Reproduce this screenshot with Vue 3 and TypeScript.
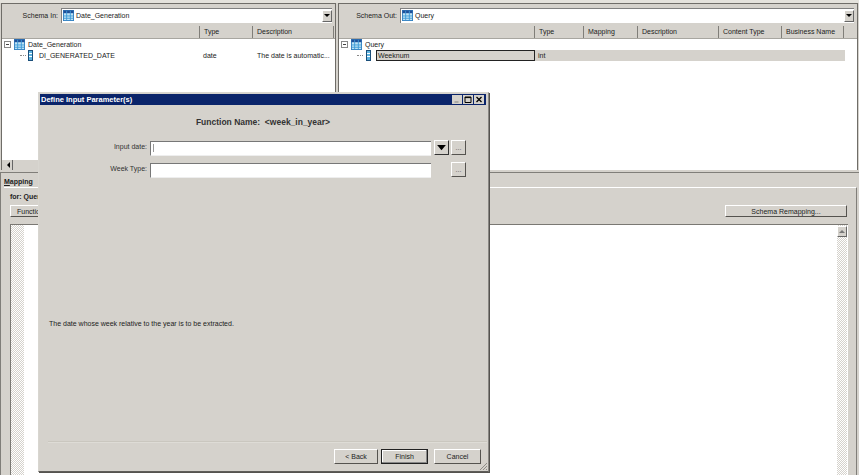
<template>
  <div class="desk">
    <div class="top-strip"></div>
    <div class="panes">
      <section class="pane left">
        <div class="schema-row">
          <label class="schema-label in">Schema In:</label>
          <div class="combo">
            <svg class="tbl" viewBox="0 0 12 12"><use href="#tbl-icon" /></svg>
            <span>Date_Generation</span>
            <span class="combo-arrow"><i></i></span>
          </div>
        </div>
        <div class="col-head">
          <div v-for="c in leftCols" :key="c.name" class="col" :style="{ width: c.w + 'px' }">{{ c.name }}</div>
        </div>
        <div class="tree">
          <div class="tree-row root">
            <span class="expander"></span>
            <svg class="tbl" viewBox="0 0 12 12"><use href="#tbl-icon" /></svg>
            <span>Date_Generation</span>
          </div>
          <div class="tree-row child">
            <span class="dots"></span>
            <svg class="field" viewBox="0 0 5 11"><use href="#field-icon" /></svg>
            <span class="name plain">DI_GENERATED_DATE</span>
            <span class="type">date</span>
            <span class="desc">The date is automatic...</span>
          </div>
        </div>
        <div class="hscroll"><span class="scroll-btn"><i></i></span></div>
      </section>

      <section class="pane right">
        <div class="schema-row">
          <label class="schema-label out">Schema Out:</label>
          <div class="combo">
            <svg class="tbl" viewBox="0 0 12 12"><use href="#tbl-icon" /></svg>
            <span>Query</span>
            <span class="combo-arrow"><i></i></span>
          </div>
        </div>
        <div class="col-head">
          <div v-for="c in rightCols" :key="c.name" class="col" :style="{ width: c.w + 'px' }">{{ c.name }}</div>
        </div>
        <div class="tree">
          <div class="tree-row root">
            <span class="expander"></span>
            <svg class="tbl" viewBox="0 0 12 12"><use href="#tbl-icon" /></svg>
            <span>Query</span>
          </div>
          <div class="tree-row child out-row">
            <span class="dots"></span>
            <svg class="field" viewBox="0 0 5 11"><use href="#field-icon" /></svg>
            <span class="selected">
              <span class="name">Weeknum</span>
              <span class="type-out">int</span>
            </span>
          </div>
        </div>
      </section>
    </div>

    <section class="mapping">
      <div class="tab-label"><u>M</u>apping</div>
      <div class="tab-page">
        <div class="for-label">for: Query</div>
        <div class="mapping-tools">
          <button class="btn fn">Functions...</button>
          <button class="btn remap">Schema Remapping...</button>
        </div>
        <div class="editor">
          <div class="hatch"></div>
          <div class="editor-body"></div>
          <div class="hatch right-hatch"><span class="scroll-up"><i></i></span></div>
        </div>
      </div>
    </section>

    <div class="dialog">
      <div class="titlebar">
        <span>Define Input Parameter(s)</span>
        <div class="win-btns">
          <span class="win"><svg viewBox="0 0 9 9"><path d="M2 7h4" stroke="#9a9a96" stroke-width="1.4" /></svg></span>
          <span class="win"><svg viewBox="0 0 9 9"><path d="M1.5 2h6v5.5h-6zM1.5 2.6h6" fill="none" stroke="#000" /></svg></span>
          <span class="win"><svg viewBox="0 0 9 9"><path d="M2 2l5 5M7 2l-5 5" stroke="#000" stroke-width="1.3" /></svg></span>
        </div>
      </div>
      <h2 class="fn-name">Function Name:&nbsp; &lt;week_in_year&gt;</h2>
      <div class="form">
        <label>Input date:</label>
        <div class="input"><span class="caret"></span></div>
        <button class="btn drop"><svg viewBox="0 0 12 8"><path d="M1 1h10L6 7z" fill="#000" /></svg></button>
        <button class="btn dots-btn">...</button>
        <label>Week Type:</label>
        <div class="input"></div>
        <span></span>
        <button class="btn dots-btn">...</button>
      </div>
      <p class="help">The date whose week relative to the year is to be extracted.</p>
      <div class="separator"></div>
      <div class="actions">
        <button class="btn back">&lt; Back</button>
        <button class="btn finish">Finish</button>
        <button class="btn cancel">Cancel</button>
      </div>
      <svg class="grip" viewBox="0 0 10 10">
        <path d="M9 2L2 9M9 5L5 9M9 8L8 9" stroke="#8f8d88" fill="none" />
      </svg>
    </div>

    <svg width="0" height="0" class="defs">
      <defs>
        <g id="tbl-icon">
          <rect x="0.5" y="0.5" width="11" height="11" fill="#bfe3f5" stroke="#2f7fc0" />
          <rect x="0.5" y="0.5" width="11" height="3" fill="#1f4f98" />
          <path d="M4 1v10M8 1v10M1 6.5h10M1 9h10" stroke="#3d9ad6" />
        </g>
        <g id="field-icon">
          <rect x="0.5" y="0.5" width="4" height="10" fill="#5fb4e0" stroke="#1b4f7a" />
          <path d="M1 3.5h3M1 6.5h3" stroke="#fff" />
        </g>
      </defs>
    </svg>
  </div>
</template>

<script setup lang="ts">
const leftCols = [
  { name: '', w: 198 },
  { name: 'Type', w: 53 },
  { name: 'Description', w: 81 },
]

const rightCols = [
  { name: '', w: 196 },
  { name: 'Type', w: 49 },
  { name: 'Mapping', w: 54 },
  { name: 'Description', w: 81 },
  { name: 'Content Type', w: 63 },
  { name: 'Business Name', w: 62 },
]
</script>

<style>
html, body {
  margin: 0;
  overflow: hidden;
  background: #fff;
}
</style>

<style scoped>
.desk {
  position: relative;
  width: 859px;
  height: 475px;
  overflow: hidden;
  background: #d5d2cc;
  font-family: "Liberation Sans", sans-serif;
  font-size: 7px;
  color: #222;
  display: flex;
  flex-direction: column;
}

.defs {
  position: absolute;
}

.top-strip {
  height: 3px;
  flex: none;
  background: #e4e2dc;
}

.panes {
  display: flex;
  gap: 2px;
  height: 167px;
  flex: none;
  padding: 0 1px 0 1px;
}

.pane {
  position: relative;
  background: #fff;
  border: 1px solid #6f6d68;
  border-bottom: none;
  box-sizing: border-box;
  display: flex;
  flex-direction: column;
}

.pane.left {
  width: 335px;
}

.pane.right {
  flex: 1;
}

.schema-row {
  height: 22px;
  flex: none;
  background: #d5d2cc;
  display: flex;
  align-items: center;
  padding-right: 3px;
}

.schema-label {
  text-align: right;
  flex: none;
  padding-right: 3px;
  box-sizing: border-box;
}

.schema-label.in {
  width: 59px;
}

.schema-label.out {
  width: 61px;
}

.combo {
  flex: 1;
  height: 15px;
  background: #fff;
  border-top: 1px solid #808080;
  border-left: 1px solid #808080;
  box-sizing: border-box;
  display: flex;
  align-items: center;
  gap: 2px;
  position: relative;
}

.combo .tbl {
  margin-left: 1px;
}

.combo-arrow {
  position: absolute;
  right: 0;
  top: 1px;
  width: 10px;
  height: 12px;
  background: #d5d2cc;
  border: 1px solid;
  border-color: #fff #666 #666 #fff;
  box-sizing: border-box;
  display: flex;
  align-items: center;
  justify-content: center;
}

.combo-arrow i {
  border: 3px solid transparent;
  border-top: 3px solid #000;
  border-bottom: none;
}

.tbl {
  width: 11px;
  height: 11px;
  flex: none;
}

.col-head {
  height: 13px;
  flex: none;
  display: flex;
  background: #d5d2cc;
  border-bottom: 1px solid #a8a6a0;
  box-sizing: border-box;
}

.col {
  flex: none;
  box-sizing: border-box;
  padding-left: 4px;
  line-height: 12px;
  border-right: 1px solid #807e79;
  white-space: nowrap;
  overflow: hidden;
}

.tree-row {
  height: 11px;
  display: flex;
  align-items: center;
  position: relative;
  white-space: nowrap;
}

.tree {
  flex: 1;
}

.root {
  padding-left: 2px;
}

.root .tbl {
  margin: 0 3px 0 3px;
}

.expander {
  width: 7px;
  height: 7px;
  border: 1px solid #888;
  box-sizing: border-box;
  background: linear-gradient(#444, #444) center / 3px 1px no-repeat;
  flex: none;
}

.child {
  padding-left: 18px;
}

.dots {
  width: 6px;
  border-top: 1px dotted #888;
  flex: none;
}

.field {
  width: 5px;
  height: 11px;
  margin-left: 2px;
  flex: none;
}

.out-row .field {
  margin-left: 3px;
}

.name.plain {
  margin-left: 6px;
  width: 164px;
  flex: none;
}

.type {
  width: 54px;
  flex: none;
}

.desc {
  flex: none;
}

.selected {
  margin-left: 5px;
  flex: 1;
  display: flex;
  height: 11px;
  margin-right: 12px;
  background: #d5d2cc;
}

.selected .name {
  width: 159px;
  height: 11px;
  box-sizing: border-box;
  flex: none;
  border: 1px solid #222;
  line-height: 9px;
  padding-left: 1px;
}

.type-out {
  padding-left: 3px;
  line-height: 11px;
}

.hscroll {
  height: 10px;
  flex: none;
  background: #d5d2cc;
  padding-left: 2px;
}

.scroll-btn {
  display: flex;
  width: 9px;
  height: 10px;
  box-sizing: border-box;
  align-items: center;
  justify-content: center;
  border-right: 1px solid #666;
}

.scroll-btn i {
  border: 3px solid transparent;
  border-right: 3px solid #000;
  border-left: none;
}

.mapping {
  flex: 1;
  margin-top: 2px;
  border-top: 1px solid #807e79;
  border-left: 1px solid #807e79;
  display: flex;
  flex-direction: column;
  padding: 0 2px 0 3px;
}

.tab-label {
  margin: 3px 0 0 0;
  line-height: 11px;
  font-weight: bold;
}

.tab-page {
  flex: 1;
  display: flex;
  flex-direction: column;
  border-top: 1px solid #fff;
  border-right: 1px solid #807e79;
  padding: 0 8px 0 6px;
}

.for-label {
  margin-top: 3px;
  line-height: 11px;
  font-weight: bold;
}

.mapping-tools {
  display: flex;
  justify-content: space-between;
  margin-top: 3px;
  padding-right: 1px;
}

.btn {
  font: inherit;
  color: inherit;
  padding: 0;
  background: #d5d2cc;
  box-sizing: border-box;
  border: 1px solid;
  border-color: #fff #55534f #55534f #fff;
}

.fn {
  width: 60px;
  height: 12px;
  text-align: left;
  padding-left: 6px;
}

.remap {
  width: 122px;
  height: 12px;
}

.editor {
  flex: 1;
  margin-top: 7px;
  background: #fff;
  border-top: 1px solid #7a7873;
  border-left: 1px solid #7a7873;
  display: flex;
}

.hatch {
  width: 13px;
  flex: none;
  background-color: #fff;
  background-image: repeating-conic-gradient(#d5d2cc 0 25%, #fff 0 50%);
  background-size: 2px 2px;
}

.right-hatch {
  width: 10px;
  margin-right: 1px;
  position: relative;
}

.editor-body {
  flex: 1;
}

.scroll-up {
  position: absolute;
  top: 1px;
  left: 0;
  width: 10px;
  height: 11px;
  box-sizing: border-box;
  background: #d5d2cc;
  border: 1px solid;
  border-color: #fff #666 #666 #fff;
  display: flex;
  align-items: center;
  justify-content: center;
}

.scroll-up i {
  border: 3px solid transparent;
  border-bottom: 3px solid #777;
  border-top: none;
}

.dialog {
  position: absolute;
  left: 38px;
  top: 92px;
  width: 451px;
  height: 380px;
  background: #d5d2cc;
  box-sizing: border-box;
  padding: 1px 1px 0 1px;
  border: 1px solid;
  border-color: #d8d6d0 #8a8884 #5f5d59 #d8d6d0;
  box-shadow: 1px 1px 0 #55534f;
  display: flex;
  flex-direction: column;
}

.titlebar {
  height: 11px;
  flex: none;
  background: #0a246a;
  color: #fff;
  font-weight: bold;
  font-size: 7.5px;
  line-height: 11px;
  padding-left: 1px;
  margin-right: 1px;
  display: flex;
  justify-content: space-between;
}

.win-btns {
  display: flex;
  gap: 1px;
  padding: 1px 2px 0 0;
}

.win {
  width: 10px;
  height: 9px;
  background: #d5d2cc;
  display: block;
}

.win svg {
  display: block;
  width: 10px;
  height: 9px;
}

.fn-name {
  margin: 12px 0 0;
  text-align: center;
  font-size: 8.5px;
  line-height: 11px;
  font-weight: bold;
  color: #333;
  padding-right: 1px;
}

.form {
  display: grid;
  grid-template-columns: 110px 284px 17px 15px;
  grid-auto-rows: 15px;
  row-gap: 7px;
  margin-top: 13px;
}

.form label {
  text-align: right;
  padding-right: 3px;
  line-height: 11px;
  color: #333;
}

.input {
  width: 281px;
  height: 15px;
  background: #fff;
  box-sizing: border-box;
  border-top: 1px solid #777;
  border-left: 1px solid #777;
  border-bottom: 1px solid #eee;
  padding: 2px 0 0 2px;
}

.caret {
  display: block;
  width: 1px;
  height: 8px;
  background: #999;
}

.drop {
  width: 15px;
  height: 15px;
  margin-top: -1px;
  border-color: #fff #333 #333 #fff;
  display: flex;
  align-items: center;
  justify-content: center;
}

.drop svg {
  width: 11px;
  height: 7px;
}

.dots-btn {
  height: 15px;
  margin-top: -1px;
  line-height: 10px;
  color: #555;
}

.help {
  margin: 140px 0 0 9px;
  line-height: 11px;
}

.separator {
  margin: 112px 0 0 8px;
  border-top: 1px solid #cac7bf;
  border-bottom: 1px solid #dedcd6;
}

.actions {
  display: flex;
  justify-content: flex-end;
  gap: 3px;
  padding: 6px 6px 0 0;
}

.actions .btn {
  height: 15px;
}

.back {
  width: 44px;
}

.finish {
  width: 47px;
  border: 1px solid #222;
  box-shadow: inset -1px -1px 0 #888, inset 1px 1px 0 #fff;
}

.cancel {
  width: 47px;
  margin-left: 3px;
}

.grip {
  position: absolute;
  right: 0;
  bottom: 0;
  width: 10px;
  height: 10px;
}
</style>
